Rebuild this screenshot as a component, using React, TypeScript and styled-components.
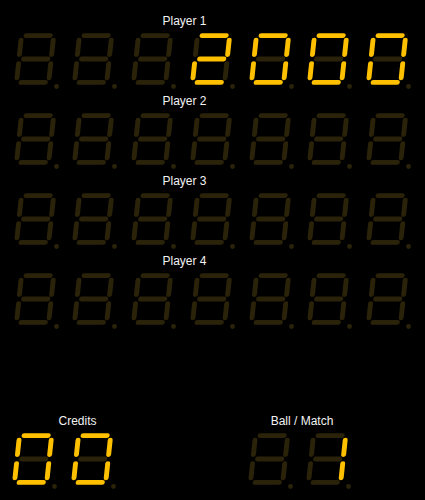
import React from "react";
import styled, { createGlobalStyle } from "styled-components";

const GlobalStyle = createGlobalStyle`
  html, body {
    margin: 0;
    padding: 0;
    background: #000;
  }
  body {
    font-family: "Liberation Sans", Arial, sans-serif;
    width: 425px;
    height: 500px;
    overflow: hidden;
  }
`;

const LIT = "#ffc000";
const DIM = "#2b2309";

const Page = styled.div`
  display: flex;
  flex-direction: column;
  width: 425px;
  height: 500px;
  padding-top: 14px;
  box-sizing: border-box;
  background: #000;
`;

const PlayerBlock = styled.section`
  display: flex;
  flex-direction: column;
  margin-bottom: 5px;
`;

const Label = styled.div<{ $width: number }>`
  width: ${(p) => p.$width}px;
  text-align: center;
  color: #f2f2f2;
  font-size: 12px;
  line-height: 14px;
  height: 14px;
  margin-bottom: 5px;
  white-space: nowrap;
`;

const DigitRow = styled.div<{ $pad: number; $gap: number }>`
  display: flex;
  padding-left: ${(p) => p.$pad}px;
  gap: ${(p) => p.$gap}px;
`;

const DigitSvg = styled.svg`
  display: block;
  width: 46px;
  height: 56px;
  flex: none;
`;

const BottomRow = styled.div`
  display: flex;
  margin-top: 80px;
`;

const Group = styled.section<{ $left: number }>`
  display: flex;
  flex-direction: column;
  margin-left: ${(p) => p.$left}px;
`;

// segment order: a b c d e f g
const MAP: Record<string, string> = {
  "0": "abcdef",
  "1": "bc",
  "2": "abged",
  "3": "abgcd",
  "4": "fgbc",
  "5": "afgcd",
  "6": "afgedc",
  "7": "abc",
  "8": "abcdefg",
  "9": "abcdfg",
  " ": "",
};

const SEGS: Record<string, [number, number, number, number]> = {
  a: [9.6, 2.6, 33.8, 2.6],
  g: [9.6, 26, 33.8, 26],
  d: [9.6, 49.4, 33.8, 49.4],
  f: [5, 7.2, 5, 21.6],
  b: [37.2, 7.2, 37.2, 21.6],
  e: [5, 30.6, 5, 44.8],
  c: [37.2, 30.6, 37.2, 44.8],
};

function Digit({ ch }: { ch: string }) {
  const on = MAP[ch] ?? "";
  return (
    <DigitSvg viewBox="0 0 46 56">
      <g transform="translate(0 26) skewX(-6) translate(0 -26)" strokeLinecap="round" strokeWidth={4.9}>
        {Object.entries(SEGS).map(([k, [x1, y1, x2, y2]]) => (
          <line key={k} x1={x1} y1={y1} x2={x2} y2={y2} stroke={on.includes(k) ? LIT : DIM} />
        ))}
      </g>
      <circle cx={42.5} cy={53.5} r={2.4} fill={DIM} />
    </DigitSvg>
  );
}

function Display({ text, pad, gap }: { text: string; pad: number; gap: number }) {
  return (
    <DigitRow $pad={pad} $gap={gap}>
      {text.split("").map((c, i) => (
        <Digit key={i} ch={c} />
      ))}
    </DigitRow>
  );
}

const players = [
  { name: "Player 1", score: "   2000" },
  { name: "Player 2", score: "       " },
  { name: "Player 3", score: "       " },
  { name: "Player 4", score: "       " },
];

export default function App() {
  return (
    <>
      <GlobalStyle />
      <Page>
        {players.map((p) => (
          <PlayerBlock key={p.name}>
            <Label $width={369}>{p.name}</Label>
            <Display text={p.score} pad={13.5} gap={12.8} />
          </PlayerBlock>
        ))}
        <BottomRow>
          <Group $left={0}>
            <Label $width={155}>Credits</Label>
            <Display text="00" pad={12} gap={13} />
          </Group>
          <Group $left={93}>
            <Label $width={108}>Ball / Match</Label>
            <Display text=" 1" pad={0} gap={12} />
          </Group>
        </BottomRow>
      </Page>
    </>
  );
}
